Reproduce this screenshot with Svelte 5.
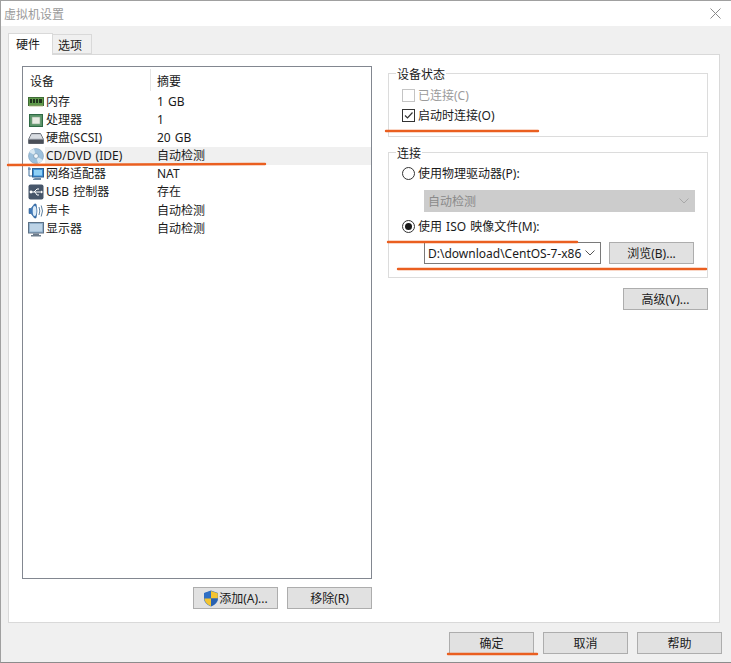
<script lang="ts">
	const devices = [
		{ icon: 'ram', name: '内存', summary: '1 GB' },
		{ icon: 'cpu', name: '处理器', summary: '1' },
		{ icon: 'disk', name: '硬盘(SCSI)', summary: '20 GB' },
		{ icon: 'cd', name: 'CD/DVD (IDE)', summary: '自动检测', active: true },
		{ icon: 'net', name: '网络适配器', summary: 'NAT' },
		{ icon: 'usb', name: 'USB 控制器', summary: '存在' },
		{ icon: 'sound', name: '声卡', summary: '自动检测' },
		{ icon: 'display', name: '显示器', summary: '自动检测' }
	];

	// hand-drawn marker strokes on top of the screenshot
	const marks = [
		'M8 165 L265 164',
		'M386 131 L538 131',
		'M388 242 L577 242',
		'M398 269 L706 269',
		'M448 654 L537 654'
	];
</script>

<div class="window">
	<header class="titlebar">
		<span>虚拟机设置</span>
		<svg class="close" width="11" height="11" viewBox="0 0 11 11">
			<path d="M0.5 0.5 L10.5 10.5 M10.5 0.5 L0.5 10.5" stroke="#8a8a8a" fill="none" />
		</svg>
	</header>

	<div class="tabs">
		<div class="tab active">硬件</div>
		<div class="tab">选项</div>
	</div>

	<main class="panel">
		<section class="left">
			<div class="list">
				<div class="list-head">
					<div class="col-a">设备</div>
					<div class="col-b">摘要</div>
				</div>
				{#each devices as d}
					<div class="row">
						<svg class="icon" width="16" height="16" viewBox="0 0 16 16">
							{#if d.icon === 'ram'}
								<rect x="0.5" y="3.5" width="15" height="8" fill="#5f9a4a" stroke="#3f6b35" />
								<path d="M2 5h2v4H2zM5 5h2v4H5zM8 5h2v4H8zM11 5h3v4h-3z" fill="#20361c" />
								<path d="M1 11.5h14v1H1z" fill="#b9c48a" />
							{:else if d.icon === 'cpu'}
								<rect x="1.5" y="2.5" width="13" height="12" fill="#5a9468" stroke="#2f6a45" />
								<rect x="4" y="5" width="8" height="7" fill="#e8ebe2" stroke="#8aa890" stroke-width="0.6" />
							{:else if d.icon === 'disk'}
								<path d="M3.5 3.5h9l3 6v4h-15v-4z" fill="#b8bec6" stroke="#6b7078" />
								<rect x="1" y="9.5" width="14" height="4" fill="#4a4f58" />
								<path d="M3.5 4.5h9l2 4h-13z" fill="#d9dde2" />
							{:else if d.icon === 'cd'}
								<circle cx="8" cy="8" r="7.5" fill="#9cc0dc" stroke="#7a9cb8" stroke-width="0.6" />
								<path d="M8 8 L1 4 A8 8 0 0 1 6 0.7 Z" fill="#d8e8f2" />
								<path d="M8 8 L15 12 A8 8 0 0 1 10 15.3 Z" fill="#d8e8f2" />
								<circle cx="8" cy="8" r="2.4" fill="#f4f8fb" stroke="#6f92ae" stroke-width="0.7" />
							{:else if d.icon === 'net'}
								<path d="M1 1v9h3M0 3h3" stroke="#3f6f9c" fill="none" />
								<rect x="4.5" y="2.5" width="11" height="8.5" fill="#3b8ed6" stroke="#2f5f8f" />
								<rect x="6" y="4" width="8" height="5.5" fill="#8fd0f5" />
								<path d="M7 12h6v2H5v-1z" fill="#6d8aa5" />
							{:else if d.icon === 'usb'}
								<rect x="0.5" y="0.5" width="15" height="15" rx="2" fill="#47566a" />
								<path d="M2 8h11M6 8l3-3h2M7 8l2 3h2" stroke="#fff" fill="none" />
								<path d="M13 6.5l2 1.5-2 1.5z" fill="#fff" />
								<circle cx="3" cy="8" r="1.4" fill="#fff" />
							{:else if d.icon === 'sound'}
								<path d="M1 5.5h2L6.5 1h1.5q2 7 0 14H6.5L3 10.5H1z" fill="#3f78b8" stroke="#2c5c8f" stroke-width="0.6" />
								<ellipse cx="6.6" cy="8" rx="1.9" ry="5" fill="#dcebf7" />
								<path d="M11 4q1.6 4 0 8M13.2 2.5q2.6 5.5 0 11" stroke="#5d7f9f" fill="none" />
							{:else}
								<rect x="0.5" y="1.5" width="15" height="10.5" fill="#8fb0cc" stroke="#5d7186" />
								<rect x="2" y="3" width="12" height="7.5" fill="#bdd3e6" />
								<path d="M5 12.5h6v1.5h2v1.5H3V14h2z" fill="#6d7c8c" />
							{/if}
						</svg>
						<div class="cell-a" class:hover={d.active}>{d.name}</div>
						<div class="cell-b" class:hover={d.active}>{d.summary}</div>
					</div>
				{/each}
			</div>
			<div class="list-actions">
				<button class="btn">
					<svg width="16" height="17" viewBox="0 0 16 17">
						<path d="M8 0.5 L15 3 V8.5 Q15 13.5 8 16.5 Q1 13.5 1 8.5 V3 Z" fill="#2f6fc4" />
						<path d="M8 1 V8.5 H1.2 V3.2 Z" fill="#2f6fc4" />
						<path d="M8 1 L14.8 3.2 V8.5 H8 Z" fill="#f4c430" />
						<path d="M8 8.5 H1.3 Q1.8 13.4 8 16.2 Z" fill="#f4c430" />
						<path d="M8 8.5 H14.7 Q14.2 13.4 8 16.2 Z" fill="#2a62b0" />
					</svg>添加(A)...
				</button>
				<button class="btn">移除(R)</button>
			</div>
		</section>

		<section class="right">
			<fieldset class="group status">
				<legend>设备状态</legend>
				<div class="option disabled">
					<span class="check off"></span>已连接(C)
				</div>
				<div class="option">
					<span class="check">
						<svg width="11" height="11" viewBox="0 0 11 11">
							<path d="M2 5.5 L4.5 8 L9.5 2.5" stroke="#333" stroke-width="1.2" fill="none" />
						</svg>
					</span>启动时连接(O)
				</div>
			</fieldset>

			<fieldset class="group connect">
				<legend>连接</legend>
				<div class="option">
					<span class="radio"></span>使用物理驱动器(P):
				</div>
				<div class="combo locked">
					<span>自动检测</span>
					<svg width="10" height="6" viewBox="0 0 10 6"><path d="M0.5 0.5 L5 5 L9.5 0.5" stroke="#a8a8a8" fill="none" /></svg>
				</div>
				<div class="option iso">
					<span class="radio on"></span>使用 ISO 映像文件(M):
				</div>
				<div class="iso-row">
					<div class="combo path">
						<span>D:\download\CentOS-7-x86</span>
						<svg width="10" height="6" viewBox="0 0 10 6"><path d="M0.5 0.5 L5 5 L9.5 0.5" stroke="#555" fill="none" /></svg>
					</div>
					<button class="btn">浏览(B)...</button>
				</div>
			</fieldset>

			<div class="advanced">
				<button class="btn">高级(V)...</button>
			</div>
		</section>
	</main>

	<footer class="footer">
		<button class="btn">确定</button>
		<button class="btn">取消</button>
		<button class="btn">帮助</button>
	</footer>

	<svg class="marks" width="731" height="663" viewBox="0 0 731 663">
		{#each marks as m}
			<path d={m} stroke="#ea5f20" stroke-width="2.4" stroke-linecap="round" fill="none" />
		{/each}
	</svg>
</div>

<style>
	:global(body) {
		margin: 0;
		background: #f0f0f0;
	}

	.window {
		position: relative;
		box-sizing: border-box;
		width: 731px;
		height: 663px;
		display: flex;
		flex-direction: column;
		overflow: hidden;
		background: #f0f0f0;
		border-left: 1px solid #a0a0a0;
		border-top: 1px solid #a0a0a0;
		border-bottom: 1px solid #8c8c8c;
		font-family: 'Noto Sans', 'Noto Sans CJK SC', sans-serif;
		font-size: 12px;
		word-spacing: 1px;
		color: #1a1a1a;
	}

	.titlebar {
		height: 25px;
		flex: none;
		display: flex;
		align-items: center;
		justify-content: space-between;
		padding: 0 10px 0 3px;
		background: #fff;
		color: #9a9a9a;
	}

	.close {
		display: block;
	}

	.tabs {
		flex: none;
		display: flex;
		align-items: flex-end;
		height: 28px;
		padding-left: 7px;
		position: relative;
		z-index: 1;
	}

	.tab {
		box-sizing: border-box;
		width: 39px;
		height: 20px;
		border: 1px solid #d9d9d9;
		border-left: none;
		background: #f0f0f0;
		padding-left: 5px;
		line-height: 21px;
	}

	.tab.active {
		width: 45px;
		height: 22px;
		margin-bottom: -1px;
		border: 1px solid #d9d9d9;
		border-bottom: none;
		background: #fff;
		padding-left: 7px;
		line-height: 21px;
	}

	.panel {
		box-sizing: border-box;
		flex: none;
		height: 569px;
		width: 712px;
		margin-left: 7px;
		border: 1px solid #d9d9d9;
		background: #fff;
		padding: 11px 11px 0 13px;
		display: flex;
		gap: 16px;
	}

	.left {
		width: 350px;
		flex: none;
	}

	.list {
		box-sizing: border-box;
		height: 513px;
		border: 1px solid #828790;
	}

	.list-head {
		display: flex;
		height: 25px;
		align-items: center;
		margin-bottom: 1px;
	}

	.col-a {
		width: 128px;
		padding-left: 7px;
		box-sizing: border-box;
		height: 22px;
		line-height: 26px;
		border-right: 1px solid #e5e5e5;
	}

	.col-b {
		padding-left: 6px;
		height: 22px;
		line-height: 26px;
	}

	.row {
		display: flex;
		height: 18.09px;
		align-items: center;
	}

	.icon {
		flex: none;
		margin: 0 1px 0 5px;
	}

	.cell-a {
		width: 112px;
		height: 18px;
		line-height: 18px;
		padding-left: 1px;
		box-sizing: border-box;
		white-space: nowrap;
	}

	.cell-b {
		flex: 1;
		height: 18px;
		line-height: 18px;
		padding-left: 1px;
		margin-left: -1px;
	}

	.hover {
		background: #f0f0f0;
	}

	.list-actions {
		display: flex;
		justify-content: flex-end;
		gap: 9px;
		margin-top: 8px;
	}

	.btn {
		box-sizing: border-box;
		width: 85px;
		height: 22px;
		flex: none;
		padding: 0;
		border: 1px solid #adadad;
		background: #e1e1e1;
		color: #1a1a1a;
		font: inherit;
		display: inline-flex;
		align-items: center;
		justify-content: center;
	}

	.right {
		width: 320px;
		flex: none;
	}

	.group {
		box-sizing: border-box;
		margin: 0;
		padding: 0 0 0 13px;
		border: 1px solid #dcdcdc;
		min-width: 0;
	}

	legend {
		margin-left: -6px;
		padding: 3px 1px 0;
		line-height: 12px;
	}

	.status {
		height: 71px;
	}

	.connect {
		height: 133px;
		margin-top: 8px;
	}

	.option {
		display: flex;
		align-items: center;
		gap: 3px;
		height: 20px;
	}

	.option.disabled {
		color: #9b9b9b;
	}

	.status .option:first-of-type {
		margin-top: 4px;
	}

	.connect .option:first-of-type {
		margin-top: 3px;
	}

	.check {
		box-sizing: border-box;
		width: 13px;
		height: 13px;
		border: 1px solid #333;
		background: #fff;
		display: flex;
		align-items: center;
		justify-content: center;
	}

	.check.off {
		border-color: #c4c4c4;
	}

	.radio {
		box-sizing: border-box;
		width: 13px;
		height: 13px;
		border: 1px solid #333;
		border-radius: 50%;
		background: #fff;
		position: relative;
	}

	.radio.on::after {
		content: '';
		position: absolute;
		inset: 2px;
		border-radius: 50%;
		background: #1a1a1a;
	}

	.combo {
		box-sizing: border-box;
		height: 22px;
		display: flex;
		align-items: center;
		justify-content: space-between;
		margin-left: 22px;
		padding: 0 5px 0 3px;
	}

	.combo.locked {
		width: 271px;
		margin-top: 7px;
		background: #cccccc;
		color: #8a8a8a;
		border: 1px solid #cccccc;
	}

	.option.iso {
		margin-top: 4px;
	}

	.iso-row {
		display: flex;
		gap: 8px;
		margin-left: 22px;
		margin-top: 6px;
		align-items: flex-start;
	}

	.combo.path {
		width: 177px;
		margin-left: 0;
		background: #fff;
		border: 1px solid #7a7a7a;
		white-space: nowrap;
	}

	.advanced {
		display: flex;
		justify-content: flex-end;
		margin-top: 10px;
	}

	.footer {
		flex: 1;
		display: flex;
		justify-content: flex-end;
		gap: 9px;
		padding: 9px 9px 0 0;
	}

	.marks {
		position: absolute;
		left: -1px;
		top: -1px;
		pointer-events: none;
	}
</style>
